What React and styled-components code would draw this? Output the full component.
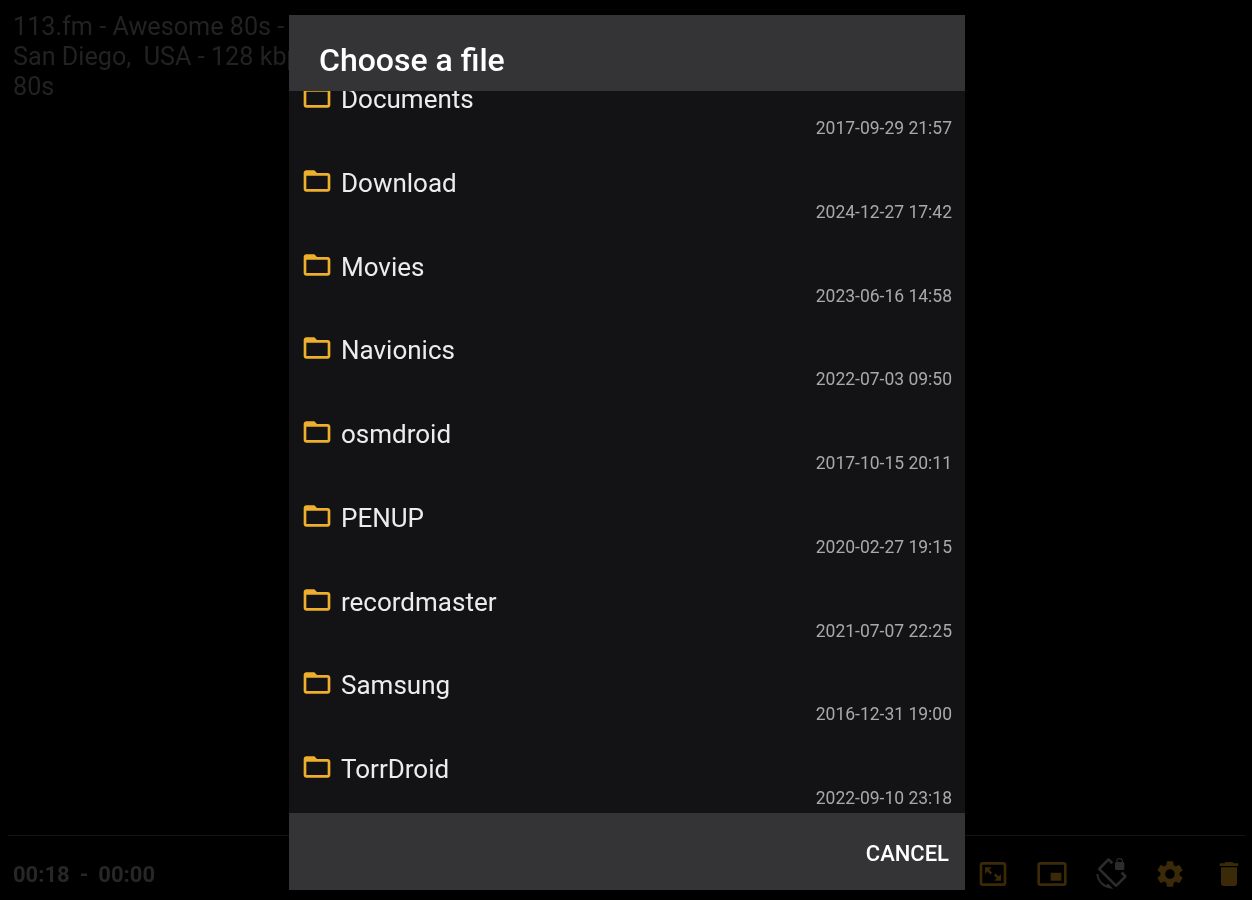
import React from "react"
import styled, { createGlobalStyle } from "styled-components"
import { MdPictureInPictureAlt, MdScreenLockRotation, MdSettings, MdDelete } from "react-icons/md"

const GlobalStyle = createGlobalStyle`
html, body {
  margin: 0;
  padding: 0;
  background: #000;
}
body {
  font-family: Roboto, "Liberation Sans", sans-serif;
}
`;

const Screen = styled.div`
width: 1252px;
height: 900px;
position: relative;
overflow: hidden;
display: flex;
flex-direction: column;
background: #000;
filter: blur(0.6px);
`;

const StationName = styled.div`
flex: 1;
padding: 12px 13px 0;
font-size: 25.2px;
line-height: 30px;
color: #222;
`;

const Line = styled.div`
white-space: pre;
`;

const Player = styled.div`
margin: 0 7px 0 8px;
height: 65px;
box-sizing: border-box;
border-top: 1px solid #141414;
display: flex;
align-items: center;
justify-content: space-between;
padding: 12px 0 0 5px;
`;

const Times = styled.div`
display: flex;
gap: 10px;
font-size: 22px;
font-weight: 700;
color: #272727;
`;

const Controls = styled.div`
display: flex;
align-items: center;
gap: 27px;
`;

const Control = styled.span`
display: flex;
color: ${props => props.$muted ? "#2c2c2c" : "#3a2a08"};
font-size: 32px;
`;

const Dialog = styled.div`
position: absolute;
left: 289px;
top: 15px;
width: 676px;
height: 875px;
display: flex;
flex-direction: column;
background: #131315;
`;

const DialogHeader = styled.div`
height: 76px;
flex: none;
position: relative;
z-index: 1;
box-sizing: border-box;
padding: 26px 30px 0;
background: #343335;
color: #fff;
font-size: 32px;
font-weight: 500;
line-height: 38px;
`;

const FileList = styled.div`
flex: 1;
overflow: hidden;
`;

const FileRows = styled.div`
margin-top: -34px;
`;

const FileRow = styled.div`
height: 83.75px;
box-sizing: border-box;
padding: 27px 13px 0 12px;
display: flex;
flex-direction: column;
`;

const RowMain = styled.div`
display: flex;
align-items: center;
height: 30px;
gap: 8px;
`;

const FolderIcon = styled.svg`
width: 32px;
height: 32px;
flex: none;
margin-top: -4px;
fill: #eeb02c;
`;

const FileName = styled.span`
font-size: 26px;
color: #ececec;
`;

const FileDate = styled.div`
margin-top: 3px;
text-align: right;
font-size: 17.5px;
line-height: 22px;
color: #a9a9a9;
`;

const DialogFooter = styled.div`
height: 77px;
flex: none;
box-sizing: border-box;
padding: 4px 16px 0;
display: flex;
align-items: center;
justify-content: flex-end;
background: #343335;
color: #fff;
font-size: 22px;
font-weight: 500;
`;

const AspectIcon = () => (
  <svg width="1em" height="1em" viewBox="0 0 24 24" fill="currentColor">
    <path d="M20 3H4c-1.1 0-2 .9-2 2v14c0 1.1.9 2 2 2h16c1.1 0 2-.9 2-2V5c0-1.1-.9-2-2-2zm0 16H4V5h16v14z" />
    <path d="M6 7h5l-1.8 1.8 2.2 2.2-1.4 1.4-2.2-2.2L6 12zM18 17h-5l1.8-1.8-2.2-2.2 1.4-1.4 2.2 2.2L18 12z" />
  </svg>
);

const folders = [
  ["Documents", "2017-09-29 21:57"],
  ["Download", "2024-12-27 17:42"],
  ["Movies", "2023-06-16 14:58"],
  ["Navionics", "2022-07-03 09:50"],
  ["osmdroid", "2017-10-15 20:11"],
  ["PENUP", "2020-02-27 19:15"],
  ["recordmaster", "2021-07-07 22:25"],
  ["Samsung", "2016-12-31 19:00"],
  ["TorrDroid", "2022-09-10 23:18"],
];

const App = () => {
  return (
    <Screen>
      <GlobalStyle />
      <StationName>
        <Line>113.fm - Awesome 80s - </Line>
        <Line>San Diego,  USA - 128 kbps</Line>
        <Line>80s</Line>
      </StationName>
      <Player>
        <Times>
          <span>00:18</span>
          <span>-</span>
          <span>00:00</span>
        </Times>
        <Controls>
          <Control><AspectIcon /></Control>
          <Control><MdPictureInPictureAlt /></Control>
          <Control $muted><MdScreenLockRotation /></Control>
          <Control><MdSettings /></Control>
          <Control><MdDelete /></Control>
        </Controls>
      </Player>
      <Dialog>
        <DialogHeader>Choose a file</DialogHeader>
        <FileList>
          <FileRows>
            {folders.map(([name, date]) => (
              <FileRow key={name}>
                <RowMain>
                  <FolderIcon viewBox="0 0 24 24">
                    <path d="M20 6h-8l-2-2H4c-1.1 0-1.99.9-1.99 2L2 18c0 1.1.9 2 2 2h16c1.1 0 2-.9 2-2V8c0-1.1-.9-2-2-2zm0 12H4V8h16v10z" />
                  </FolderIcon>
                  <FileName>{name}</FileName>
                </RowMain>
                <FileDate>{date}</FileDate>
              </FileRow>
            ))}
          </FileRows>
        </FileList>
        <DialogFooter>CANCEL</DialogFooter>
      </Dialog>
    </Screen>
  )
}

export default App
